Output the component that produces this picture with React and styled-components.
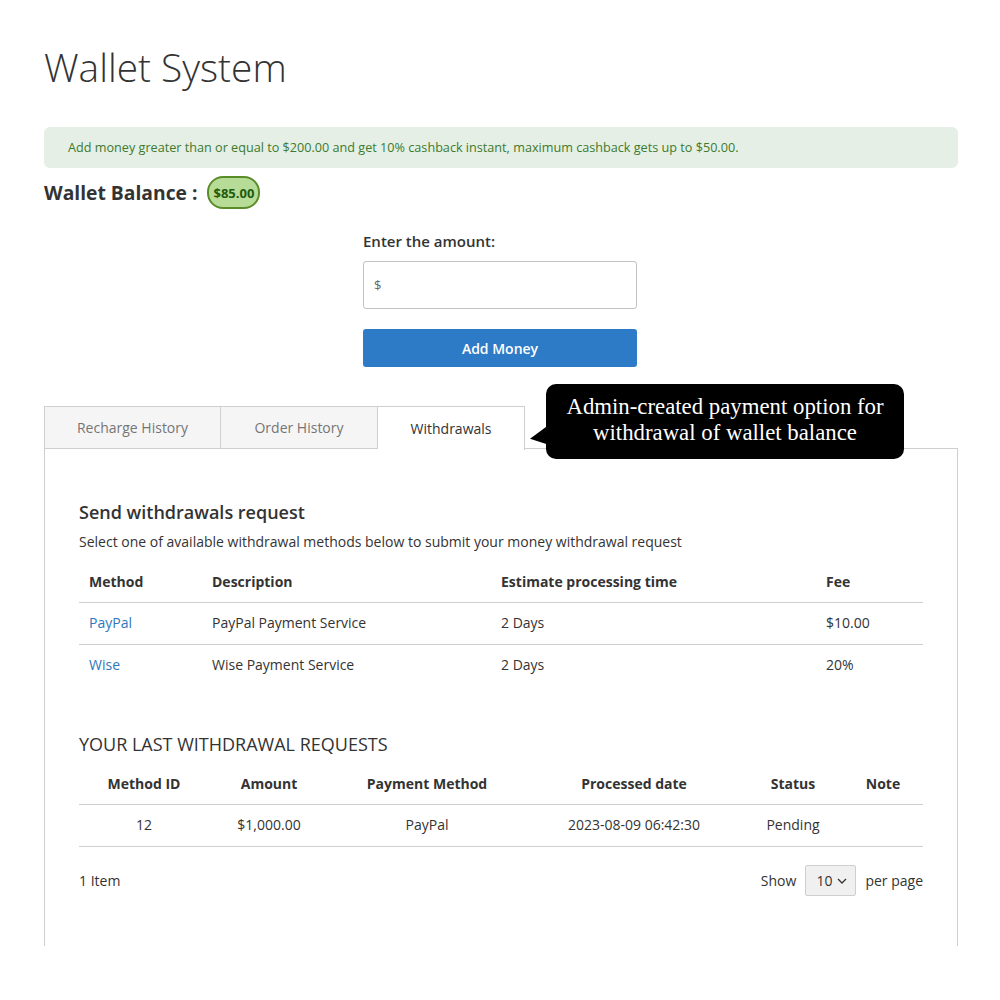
import React from 'react'
import styled, { createGlobalStyle } from 'styled-components'

const GlobalStyle = createGlobalStyle`
  html, body {
    margin: 0;
    padding: 0;
    background: #fff;
    font-family: 'Open Sans', 'Liberation Sans', sans-serif;
    color: #333;
  }
  * { box-sizing: border-box; }
`

const Page = styled.div`
  width: 1000px;
  height: 1000px;
  padding: 42px 42px 0 44px;
  overflow: hidden;
`

const Title = styled.h1`
  margin: 0;
  font-size: 38.8px;
  font-weight: 300;
  line-height: 50px;
  color: #333;
`

const Notice = styled.div`
  margin-top: 35px;
  background: #e5efe5;
  border-radius: 6px;
  padding: 12px 24px;
  font-size: 12.65px;
  line-height: 17px;
  color: #3d7a2e;
`

const BalanceRow = styled.div`
  display: flex;
  align-items: center;
  gap: 10px;
  margin-top: 8px;
`

const BalanceLabel = styled.span`
  font-size: 19.3px;
  font-weight: 700;
  color: #333;
`

const Badge = styled.span`
  display: inline-flex;
  align-items: center;
  height: 33px;
  padding: 0 4px;
  border: 2px solid #5b8c2a;
  border-radius: 16px;
  background: #b6dc98;
  color: #245a0c;
  font-size: 13px;
  font-weight: 700;
`

const Form = styled.div`
  width: 274px;
  margin: 22px 0 0 319px;
`

const Label = styled.div`
  font-size: 15px;
  font-weight: 600;
  line-height: 20px;
  color: #333;
`

const Input = styled.div`
  margin-top: 10px;
  height: 48px;
  border: 1px solid #c2c2c2;
  border-radius: 3px;
  display: flex;
  align-items: center;
  padding-left: 10px;
  font-size: 13px;
  color: #666;
`

const Button = styled.button`
  display: block;
  width: 100%;
  height: 38px;
  margin-top: 20px;
  border: none;
  border-radius: 3px;
  background: #2d7ac7;
  color: #fff;
  font-family: inherit;
  font-size: 14px;
  font-weight: 600;
`

const TabsArea = styled.div`
  position: relative;
  margin-top: 39px;
`

const TabBar = styled.div`
  display: flex;
  height: 43px;
`

const Tab = styled.div`
  width: ${p => p.$w}px;
  height: ${p => (p.$active ? 44 : 43)}px;
  display: flex;
  align-items: center;
  justify-content: center;
  border: 1px solid #cfcfcf;
  border-left-width: ${p => (p.$first ? 1 : 0)}px;
  border-bottom: ${p => (p.$active ? 'none' : '1px solid #cfcfcf')};
  background: ${p => (p.$active ? '#fff' : '#f5f5f5')};
  color: ${p => (p.$active ? '#333' : '#757575')};
  font-size: 14px;
  position: relative;
  z-index: 1;
`

const Panel = styled.div`
  border: 1px solid #cfcfcf;
  border-bottom: none;
  margin-top: -1px;
  height: 498px;
  padding: 51px 34px 0 34px;
`

const Bubble = styled.div`
  position: absolute;
  left: 502px;
  top: -22px;
  width: 358px;
  height: 75px;
  padding-bottom: 4px;
  background: #000;
  border-radius: 10px;
  color: #fff;
  font-family: 'Liberation Serif', 'Times New Roman', serif;
  font-size: 22.8px;
  line-height: 26px;
  text-align: center;
  display: flex;
  align-items: center;
  justify-content: center;
  z-index: 2;

  &::before {
    content: '';
    position: absolute;
    left: -16px;
    top: 44px;
    border-style: solid;
    border-width: 9px 17px 9px 0;
    border-color: transparent #000 transparent transparent;
    transform: skewY(-12deg);
  }
`

const SectionTitle = styled.h2`
  margin: 0;
  font-size: 18px;
  font-weight: 600;
  line-height: 24px;
  color: #333;
`

const SectionCaps = styled(SectionTitle)`
  font-weight: 500;
  text-transform: uppercase;
  margin-top: 46px;
`

const Hint = styled.p`
  margin: 8px 0 0;
  font-size: 14px;
  line-height: 19px;
  color: #333;
`

const Table = styled.table`
  width: 100%;
  border-collapse: collapse;
  margin-top: ${p => p.$mt}px;
  font-size: 14px;
  color: #333;
`

const Th = styled.th`
  text-align: ${p => (p.$center ? 'center' : 'left')};
  font-weight: 700;
  padding: 10px 10px 10px;
  border-bottom: 1px solid #cfcfcf;
  width: ${p => (p.$w ? `${p.$w}px` : 'auto')};
  line-height: 20px;
`

const Td = styled.td`
  text-align: ${p => (p.$center ? 'center' : 'left')};
  padding: 10px 10px 11px;
  line-height: 20px;
  border-bottom: ${p => (p.$line ? '1px solid #cfcfcf' : 'none')};
  color: ${p => (p.$link ? '#2f77bd' : '#333')};
`

const Footer = styled.div`
  display: flex;
  align-items: center;
  justify-content: space-between;
  margin-top: 18px;
  font-size: 14px;
  color: #333;
`

const Pager = styled.div`
  display: flex;
  align-items: center;
  gap: 9px;
`

const Select = styled.div`
  display: flex;
  align-items: center;
  gap: 5px;
  height: 31px;
  padding: 0 8px 0 10px;
  border: 1px solid #cfcfcf;
  border-radius: 2px;
  background: #f0f0f0;
`

const methods = [
  { name: 'PayPal', desc: 'PayPal Payment Service', time: '2 Days', fee: '$10.00' },
  { name: 'Wise', desc: 'Wise Payment Service', time: '2 Days', fee: '20%' }
]

const App = () => (
  <Page>
    <GlobalStyle />
    <Title>Wallet System</Title>
    <Notice>
      Add money greater than or equal to $200.00 and get 10% cashback instant, maximum cashback gets up to $50.00.
    </Notice>
    <BalanceRow>
      <BalanceLabel>Wallet Balance :</BalanceLabel>
      <Badge>$85.00</Badge>
    </BalanceRow>
    <Form>
      <Label>Enter the amount:</Label>
      <Input>$</Input>
      <Button>Add Money</Button>
    </Form>
    <TabsArea>
      <TabBar>
        <Tab $w={177} $first>Recharge History</Tab>
        <Tab $w={157}>Order History</Tab>
        <Tab $w={147} $active>Withdrawals</Tab>
      </TabBar>
      <Bubble>
        Admin-created payment option for<br />withdrawal of wallet balance
      </Bubble>
      <Panel>
        <SectionTitle>Send withdrawals request</SectionTitle>
        <Hint>Select one of available withdrawal methods below to submit your money withdrawal request</Hint>
        <Table $mt={11}>
          <thead>
            <tr>
              <Th $w={123}>Method</Th>
              <Th $w={289}>Description</Th>
              <Th $w={325}>Estimate processing time</Th>
              <Th>Fee</Th>
            </tr>
          </thead>
          <tbody>
            {methods.map((m, i) => (
              <tr key={m.name}>
                <Td $link $line={i === 0}>{m.name}</Td>
                <Td $line={i === 0}>{m.desc}</Td>
                <Td $line={i === 0}>{m.time}</Td>
                <Td $line={i === 0}>{m.fee}</Td>
              </tr>
            ))}
          </tbody>
        </Table>
        <SectionCaps>Your last withdrawal requests</SectionCaps>
        <Table $mt={8}>
          <thead>
            <tr>
              <Th $center $w={130}>Method ID</Th>
              <Th $center $w={120}>Amount</Th>
              <Th $center $w={196}>Payment Method</Th>
              <Th $center $w={218}>Processed date</Th>
              <Th $center $w={100}>Status</Th>
              <Th $center>Note</Th>
            </tr>
          </thead>
          <tbody>
            <tr>
              <Td $center $line>12</Td>
              <Td $center $line>$1,000.00</Td>
              <Td $center $line>PayPal</Td>
              <Td $center $line>2023-08-09 06:42:30</Td>
              <Td $center $line>Pending</Td>
              <Td $center $line></Td>
            </tr>
          </tbody>
        </Table>
        <Footer>
          <span>1 Item</span>
          <Pager>
            <span>Show</span>
            <Select>
              10
              <svg width="10" height="6" viewBox="0 0 10 6" fill="none" stroke="#333" strokeWidth="1.3">
                <path d="M1 1l4 4 4-4" />
              </svg>
            </Select>
            <span>per page</span>
          </Pager>
        </Footer>
      </Panel>
    </TabsArea>
  </Page>
)

export default App
